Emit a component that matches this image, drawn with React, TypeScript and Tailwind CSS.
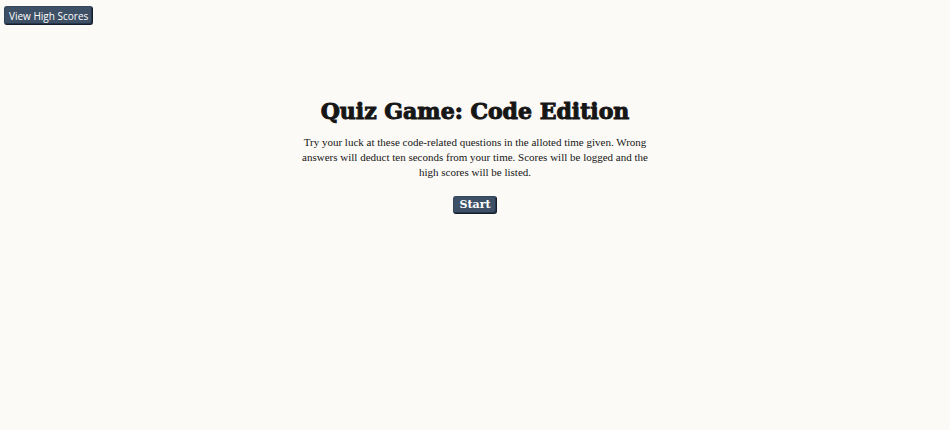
export default function App() {
  return (
    <div className="min-h-screen bg-[#fcfaf6] text-[#161616]">
      <header className="flex px-1 pt-1.5">
        <button
          type="button"
          className="flex h-[19px] items-center rounded-[3px] border border-t-[#34465a] border-r-[#141e2b] border-b-[#141e2b] border-l-[#34465a] bg-[#3d5066] px-1 font-['Open_Sans',sans-serif] text-[10px] leading-4 text-white shadow-[inset_-1px_-1px_0_#26364a]"
        >
          View High Scores
        </button>
      </header>
      <main className="mx-auto flex max-w-[352px] flex-col items-center pt-[70px] text-center">
        <h1 className="whitespace-nowrap font-['DejaVu_Serif',serif] text-[22px] leading-8 font-black [-webkit-text-stroke:1px_#161616]">
          Quiz Game: Code Edition
        </h1>
        <p className="mt-2 font-['Liberation_Serif',serif] text-[11px] leading-[15px]">
          Try your luck at these code-related questions in the alloted time given. Wrong answers will deduct ten seconds from your time. Scores will be logged and the high scores will be listed.
        </p>
        <button
          type="button"
          className="mt-4 flex h-[18px] items-center rounded-[3px] border border-t-[#34465a] border-r-[#141e2b] border-b-[#141e2b] border-l-[#34465a] bg-[#3d5066] px-[5px] font-['DejaVu_Serif',serif] text-[11px] leading-4 font-black text-white shadow-[inset_-1px_-1px_0_#26364a]"
        >
          Start
        </button>
      </main>
    </div>
  );
}
